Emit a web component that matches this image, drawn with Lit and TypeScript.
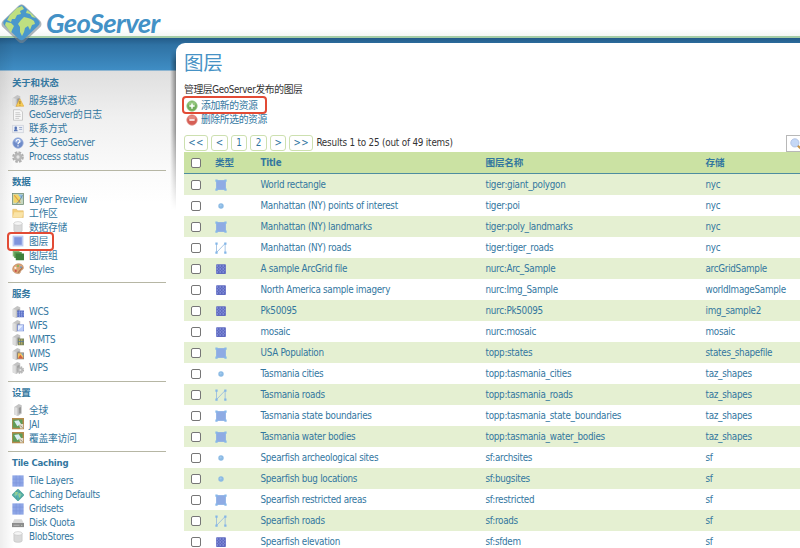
import { LitElement, html, svg, css } from "lit";
import { customElement } from "lit/decorators.js";

const server = svg`<path d="M1 4l6-4 4 1.500v11L6 16l-5-2z" fill="#c3c3c3"/><path d="M1 4l4 1v10.500l-4-1.500z" fill="#dedede"/><path d="M7 5l3-1v8l-3 1z" fill="#989898"/>`;
const grid = svg`<rect x=".5" y=".5" width="15" height="15" fill="#8ea6e6"/><path d="M1 5.500h14M1 10.500h14M5.500 1v14M10.500 1v14" stroke="#7f96dc" stroke-width="1" fill="none"/>`;
const photo = svg`<rect x="0" y="0" width="16" height="15" fill="#b58a4c"/><rect x="1" y="2" width="13" height="11" fill="#5f9c58"/><path d="M3 4l6-1 3 5-5 3z" fill="#d7eef2"/><path d="M9 8h6v6h-4z" fill="#e3dccc"/><path d="M11 10l3 3" stroke="#776d55"/>`;
const db = svg`<path d="M2.500 3v10c0 2.800 11 2.800 11 0V3z" fill="#dadada" stroke="#b9b9b9" stroke-width=".7"/><ellipse cx="8" cy="3.300" rx="5.500" ry="2.500" fill="#f6f6f6" stroke="#bdbdbd" stroke-width=".7"/>`;
const gear = svg`<circle cx="8" cy="8" r="5.600" fill="#b8b8b8"/><circle cx="8" cy="8" r="6.500" fill="none" stroke="#b0b0b0" stroke-width="2.600" stroke-dasharray="3.400 1.700"/><circle cx="8" cy="8" r="2.200" fill="#e6e6e6"/>`;

const icons: Record<string, unknown> = {
  status: svg`${server}<path d="M10.500 5l5.200 10H5.500z" fill="#f7cf58" stroke="#e0a536" stroke-width=".8"/><path d="M10.600 8v4M10.600 13v1" stroke="#8c6520" stroke-width="1.200"/>`,
  page: svg`<path d="M2 1h9l3 3v11H2z" fill="#f7f7f7" stroke="#bcbcbc"/><path d="M4.500 5h6M4.500 7.500h7M4.500 10h7M4.500 12.500h5" stroke="#b5b5b5" stroke-width=".9"/>`,
  contact: svg`<rect x="1" y="3" width="14" height="10" fill="#eef0f5" stroke="#c3c8d3" stroke-width=".8"/><circle cx="5" cy="6.500" r="1.800" fill="#5573b5"/><path d="M2.500 11c0-4 5-4 5 0z" fill="#5573b5"/><path d="M9.500 6h4M9.500 8.500h4" stroke="#8498c0"/>`,
  help: svg`<circle cx="8" cy="8" r="7" fill="#6f8cc9" stroke="#a7b8de" stroke-width="1"/><ellipse cx="8" cy="5" rx="5" ry="3.300" fill="#92abde"/><path d="M5.500 6c0-3.500 5-3.500 5-.5 0 1.800-2.500 1.800-2.500 4M8 11v1.800" stroke="#fff" stroke-width="1.600" fill="none"/>`,
  gear,
  preview: svg`<rect x=".7" y=".7" width="14.600" height="14.600" fill="#c7d7c0" stroke="#6a876d"/><path d="M2 2h6l4 6-2 5H2z" fill="#f0d568"/><path d="M8 2h6v7z" fill="#8dbde2"/><path d="M3 3l8 10" stroke="#e09b3e" stroke-width="1.500"/><path d="M14 3L9 12l-3 2" stroke="#597e9d" fill="none"/>`,
  folder: svg`<path d="M1 3h5l1.500 2H15v9H1z" fill="#f3cf7d" stroke="#deb25c" stroke-width=".7"/><path d="M3 7h12l-1.500 7H1z" fill="#fae4a8"/>`,
  db,
  layer: svg`<rect x=".8" y=".8" width="14.400" height="14.400" fill="#bccbf2"/><rect x="3" y="3" width="10" height="10" fill="#7f94dd"/>`,
  group: svg`<path d="M1 2h9v8H1z" fill="#86b979"/><path d="M3 4h10v8H3z" fill="#5d9b54"/><path d="M5 6h11v9H5z" fill="#3e803d"/>`,
  palette: svg`<path d="M1 7c1-7 13-8 14-2 1 4-2 4-3 5s0 5-5 4C3 13.500 0 11 1 7z" fill="#dca475" stroke="#b77b54" stroke-width=".7"/><circle cx="4.500" cy="6.500" r="1.500" fill="#fbefe0"/><circle cx="8" cy="4" r="1.400" fill="#83b85b"/><circle cx="12" cy="5.500" r="1.300" fill="#6998cd"/><circle cx="5" cy="10.500" r="1.400" fill="#cc534c"/><path d="M8 13l6-7" stroke="#a1734d" stroke-width="1.500"/>`,
  wcs: svg`${server}<rect x="7" y="6" width="9" height="9" fill="#5b71c5"/><path d="M7 9h9M7 12h9M10 6v9M13 6v9" stroke="#a1b1ed" stroke-dasharray="1.500 1"/>`,
  wfs: svg`${server}<rect x="7.500" y="6.500" width="8" height="8" fill="#e7efff" stroke="#7187d3"/><path d="M8 14l7-7v7z" fill="#b9cbfa"/>`,
  wmts: svg`${server}<rect x="8" y="6" width="8" height="9" fill="#7c875e"/><path d="M10 7v7M13 7v7" stroke="#d6c06c"/><path d="M8 10h8" stroke="#5576a0"/>`,
  wms: svg`${server}<rect x="7.500" y="6.500" width="8" height="8" fill="#f2c562" stroke="#877a72"/><path d="M8 14l3-5 4 5z" fill="#d45d42"/><path d="M12 7h3v4z" fill="#78a5cc"/>`,
  wps: svg`${server}<g transform="translate(6 5.500) scale(.64)">${gear}</g>`,
  server: svg`<g transform="translate(2 0)">${server}</g>`,
  photo,
  grid,
  globe: svg`<path d="M8 1.300L14.700 8 8 14.700 1.300 8z" fill="#4dabb4" stroke="#4ba39c" stroke-width="2.600" stroke-linejoin="round"/><path d="M4 4h4l-1 4-4 1zM9 5l4 2-3 5-2-4z" fill="#9bd188"/><path d="M1 8h14M8 1v14M4.500 4.500v7M11.500 4.500v7" stroke="#73c5c2" stroke-width=".7"/>`,
  disk: svg`<path d="M3 3h10l3 6H0z" fill="#d9d9d9"/><path d="M0 8h16v5.500H0z" fill="#8c8c8c"/><path d="M2 11h8" stroke="#c9c9c9"/><circle cx="13" cy="11" r=".8" fill="#d5e4ca"/>`,
  polygon: svg`<path d="M2 2h12v12H2z" fill="#8eabe4" stroke="#88ace4"/><path d="M.5.500h3v3h-3zM12.500.500h3v3h-3zM.5 12.500h3v3h-3zM12.500 12.500h3v3h-3z" fill="#86b8e9"/>`,
  point: svg`<circle cx="8" cy="8" r="3.600" fill="#8bbae4"/><circle cx="7.500" cy="7.300" r="1.400" fill="#a3caee"/>`,
  line: svg`<path d="M2 2v12L13.500 2v12" stroke="#94b8df" stroke-width="1.100" fill="none"/><path d="M.5.500h3v3h-3zM.5 12.500h3v3h-3zM12.300.500h3v3h-3zM12.300 12.500h3v3h-3z" fill="#83b6e8"/>`,
  raster: svg`<rect x="1.500" y="1.500" width="13" height="13" rx="1" fill="#5f6ac0"/><path d="M2 4h12M2 8h12M2 12h12" stroke="#8592dc" stroke-width="1.800" stroke-dasharray="2 2"/><path d="M4 6h10M4 10h10" stroke="#7884d2" stroke-width="1.600" stroke-dasharray="2 2"/>`,
  add: svg`<circle cx="8" cy="8" r="7" fill="#72ad5b" stroke="#a2cc91"/><ellipse cx="8" cy="5" rx="5" ry="3" fill="#94c67d"/><path d="M8 4.500v7M4.500 8h7" stroke="#fff" stroke-width="2"/>`,
  remove: svg`<circle cx="8" cy="8" r="7" fill="#d65f56" stroke="#e39d96"/><ellipse cx="8" cy="5" rx="5" ry="3" fill="#e58a81"/><path d="M4.500 8h7" stroke="#fff" stroke-width="2"/>`,
  search: svg`<path d="M10 10l5 4.500" stroke="#c99549" stroke-width="3"/><circle cx="6.500" cy="6.500" r="5.500" fill="#c5d8f6" stroke="#a5b8dd"/>`,
};
const icon = (name: string) => html`<svg class="icon" viewBox="0 0 16 16">${icons[name]}</svg>`;

const menu: [string, [string, string][]][] = [
  ["关于和状态", [["status", "服务器状态"], ["page", "GeoServer的日志"], ["contact", "联系方式"], ["help", "关于 GeoServer"], ["gear", "Process status"]]],
  ["数据", [["preview", "Layer Preview"], ["folder", "工作区"], ["db", "数据存储"], ["layer", "图层"], ["group", "图层组"], ["palette", "Styles"]]],
  ["服务", [["wcs", "WCS"], ["wfs", "WFS"], ["wmts", "WMTS"], ["wms", "WMS"], ["wps", "WPS"]]],
  ["设置", [["server", "全球"], ["photo", "JAI"], ["photo", "覆盖率访问"]]],
  ["Tile Caching", [["grid", "Tile Layers"], ["globe", "Caching Defaults"], ["grid", "Gridsets"], ["disk", "Disk Quota"], ["db", "BlobStores"]]],
];

const rows: [string, string, string, string][] = [
  ["polygon", "World rectangle", "tiger:giant_polygon", "nyc"],
  ["point", "Manhattan (NY) points of interest", "tiger:poi", "nyc"],
  ["polygon", "Manhattan (NY) landmarks", "tiger:poly_landmarks", "nyc"],
  ["line", "Manhattan (NY) roads", "tiger:tiger_roads", "nyc"],
  ["raster", "A sample ArcGrid file", "nurc:Arc_Sample", "arcGridSample"],
  ["raster", "North America sample imagery", "nurc:Img_Sample", "worldImageSample"],
  ["raster", "Pk50095", "nurc:Pk50095", "img_sample2"],
  ["raster", "mosaic", "nurc:mosaic", "mosaic"],
  ["polygon", "USA Population", "topp:states", "states_shapefile"],
  ["point", "Tasmania cities", "topp:tasmania_cities", "taz_shapes"],
  ["line", "Tasmania roads", "topp:tasmania_roads", "taz_shapes"],
  ["polygon", "Tasmania state boundaries", "topp:tasmania_state_boundaries", "taz_shapes"],
  ["polygon", "Tasmania water bodies", "topp:tasmania_water_bodies", "taz_shapes"],
  ["point", "Spearfish archeological sites", "sf:archsites", "sf"],
  ["point", "Spearfish bug locations", "sf:bugsites", "sf"],
  ["polygon", "Spearfish restricted areas", "sf:restricted", "sf"],
  ["line", "Spearfish roads", "sf:roads", "sf"],
  ["raster", "Spearfish elevation", "sf:sfdem", "sf"],
];

@customElement("app-root")
export class AppRoot extends LitElement {
  static styles = css`
    :host { display: block; width: 800px; height: 548px; overflow: hidden; background: #fff; color: #33779f;
      font: 9.8px/14px "DejaVu Sans Condensed", "Noto Sans CJK SC", sans-serif; letter-spacing: -.29px; }
    *, *::after { box-sizing: border-box; }
    .page { height: 548px; display: grid; grid-template-rows: 36px 1fr; position: relative; }
    .brand { display: flex; background: linear-gradient(#fff 80%, #f4f6f4); }
    .globe { position: absolute; left: 1px; top: 2px; width: 42px; height: 43px; z-index: 3; }
    .wordmark { margin: 5px 0 0 46px; font: italic 700 27.5px/36px Lato, sans-serif; letter-spacing: -.65px; color: #4391c6; }
    .body { display: grid; grid-template-columns: 176px 1fr; border-top: 2px solid #a5cda6; min-height: 0;
      background: linear-gradient(#235b88, #2f72a4 7px, #3f8dc4 32px, #dfdfdf 33px, #f0f0f0 80px, #fbfbfb 135px, #fff 165px); }
    .side { padding: 37.2px 10px 0 8px; background: linear-gradient(90deg, #00000012, transparent 14px); }
    .section { border-bottom: 1.3px solid #b6b6a4; margin-bottom: 2.9px; padding: 0 0 6px 4px; }
    .section:last-child { border: 0; }
    .heading { font-weight: 700; height: 16px; line-height: 16px; margin: 0 0 2.4px; font-size: 9.5px; letter-spacing: -.2px; white-space: nowrap; }
    .item { display: flex; align-items: center; gap: 5px; height: 14.05px; width: max-content; position: relative; white-space: nowrap; }
    .side .item span { position: relative; top: .5px; }
    .side .item { letter-spacing: -.27px; }
    .item .icon { width: 12px; height: 12px; }
    .icon { display: block; flex: none; }
    .mark::after { content: ""; position: absolute; border: 2px solid #e24b35; border-radius: 4px; left: -5px; top: -2.500px; width: 47px; height: 19px; z-index: 1; }
    .main { margin-top: 5px; border-radius: 9px 0 0 0; background: #fff; padding: 7px 0 0 8px; position: relative; min-width: 0; }
    .shade { position: absolute; left: 170px; top: 50px; width: 6px; height: 160px;
      background: linear-gradient(90deg, transparent, #0006); -webkit-mask-image: linear-gradient(transparent, #000 12px, #000 80px, transparent); mask-image: linear-gradient(transparent, #000 12px, #000 80px, transparent); }
    h1 { margin: 0; font-size: 19.5px; line-height: 27px; font-weight: 400; color: #4692c5; }
    .about { color: #333; margin-top: 6px; letter-spacing: -.38px; }
    .actions { padding-left: 2px; margin-top: 1.500px; letter-spacing: -.38px; }
    .actions .item { gap: 3px; height: 14px; }
    .actions .mark::after { left: -4px; top: -3px; width: 85px; height: 18px; }
    .pager { display: flex; gap: 3px; margin-top: 8px; height: 16px; align-items: center; color: #333; white-space: nowrap; }
    .pg { height: 16px; border: 1px solid #cde0b0; border-radius: 3px; text-align: center; color: #2d73a0; line-height: 14px; }
    .narrow { width: 16.600px; } .wide { width: 24px; letter-spacing: .4px; }
    .results { letter-spacing: -.19px; }
    .finder { position: absolute; right: -2px; top: 92px; width: 16px; height: 17px; border: 1px solid #b8b8b8; padding: 2px 0 0 3px; background: #fff; }
    .finder .icon { width: 12px; height: 12px; }
    .row { display: grid; grid-template-columns: 31px 45.500px 225px 220px 1fr; align-items: center; height: 21px; white-space: nowrap; }
    .row:nth-child(even) { background: #e5f0d2; }
    .row.head { height: 22px; margin-top: 1.500px; background: #cbe2a3; border-bottom: 1px solid #4e8d9f; font-weight: 700; font-size: 9.6px; letter-spacing: -.2px; }
    .row .icon { width: 12px; height: 12px; }
    .box { width: 10px; height: 10px; margin-left: 7px; border: 1px solid #767676; border-radius: 2px; background: #fff; }
  `;

  render() {
    return html`<div class="page">
      <div class="brand"><span class="wordmark">GeoServer</span></div>
      <svg class="globe" viewBox="0 0 42 43">
        <path d="M20.500 7L36 22 20.500 36.500 5 22z" fill="#7b8790" stroke="#7b8790" stroke-width="9" stroke-linejoin="round" opacity=".6"/>
        <path d="M20.500 7.500L34.500 20.800 20.500 34 6.500 20.800z" fill="#4a98cc" stroke="#4a98cc" stroke-width="8" stroke-linejoin="round"/>
        <path d="M9 13l7-7 5-2 2 3-4 2 1 3-4 1-2 4-3 0-1 3-4-2zM5 20l5 1 3 3-2 4-1 3-3-4-3-4zM20 18l3-3 4 1 3 1 3 2 1 3-3 1-2 5-2-4-3 2-1 4-2 4-2-4 0-5-2-3zM26 8l4 3 5 5-4-1-2-3-4-1z" fill="#bfdf81"/>
      </svg>
      <div class="body">
        <nav class="side">${menu.map(([title, items]) => html`<section class="section">
          <div class="heading">${title}</div>
          ${items.map(([i, t]) => html`<div class="item ${i === "layer" ? "mark" : ""}">${icon(i)}<span>${t}</span></div>`)}
        </section>`)}</nav>
        <main class="main">
          <h1>图层</h1>
          <div class="about">管理层GeoServer发布的图层</div>
          <div class="actions">
            <div class="item mark">${icon("add")}<span>添加新的资源</span></div>
            <div class="item">${icon("remove")}<span>删除所选的资源</span></div>
          </div>
          <div class="pager">
            ${["<<", "<", "1", "2", ">", ">>"].map((t) => html`<span class="pg ${t.length > 1 ? "wide" : "narrow"}">${t}</span>`)}
            <span class="results">Results 1 to 25 (out of 49 items)</span>
          </div>
          <div class="finder">${icon("search")}</div>
          <div class="table">
            <div class="row head"><i class="box"></i><span>类型</span><span>Title</span><span>图层名称</span><span>存储</span></div>
            ${rows.map(([i, title, name, store]) => html`<div class="row"><i class="box"></i>${icon(i)}<span>${title}</span><span>${name}</span><span>${store}</span></div>`)}
          </div>
        </main>
      </div>
      <div class="shade"></div>
    </div>`;
  }
}
